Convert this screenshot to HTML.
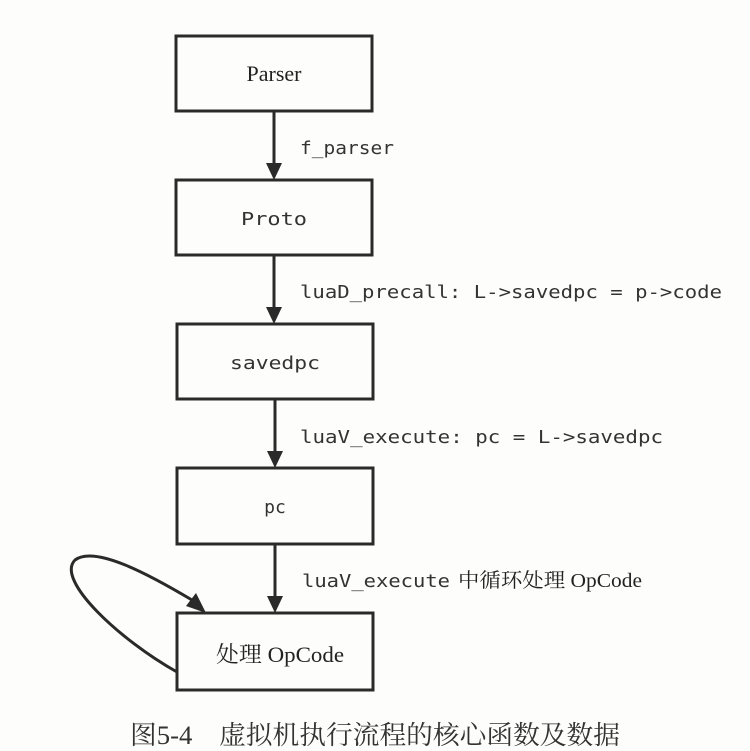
<!DOCTYPE html>
<html><head><meta charset="utf-8"><style>
body{margin:0;background:#fdfdfc;}
svg{display:block}
.m{font-family:"DejaVu Sans Mono","Liberation Mono",monospace;font-size:18px;fill:#333}
.s{font-family:"Liberation Serif","Noto Serif CJK SC",serif;font-size:22px;fill:#222}
</style></head><body>
<svg width="750" height="751" viewBox="0 0 750 751">
<g fill="none" stroke="#2a2a2a" stroke-width="3">
<rect x="176" y="36" width="196" height="75"/>
<rect x="176" y="180" width="196" height="75"/>
<rect x="177" y="324" width="196" height="75"/>
<rect x="177" y="468" width="196" height="76"/>
<rect x="177" y="613" width="196" height="77"/>
<line x1="274" y1="111" x2="274" y2="165"/>
<line x1="274" y1="255" x2="274" y2="309"/>
<line x1="275" y1="399" x2="275" y2="453"/>
<line x1="275" y1="544" x2="275" y2="598"/>
<path d="M177 672 C120 640 55 580 75 560 C95 545 150 575 192 600"/>
</g>
<g fill="#2a2a2a">
<polygon points="266,163 282,163 274,180"/>
<polygon points="266,307 282,307 274,324"/>
<polygon points="267,451 283,451 275,468"/>
<polygon points="267,596 283,596 275,613"/>
<polygon points="186,606 196,593 206,613"/>
</g>
<text x="274" y="81" text-anchor="middle" class="s">Parser</text>
<text x="274" y="225" text-anchor="middle" class="m" textLength="66" lengthAdjust="spacingAndGlyphs">Proto</text>
<text x="275" y="369" text-anchor="middle" class="m" textLength="90" lengthAdjust="spacingAndGlyphs">savedpc</text>
<text x="275" y="513" text-anchor="middle" class="m">pc</text>
<text x="216" y="662" class="s" textLength="128" lengthAdjust="spacingAndGlyphs">处理 OpCode</text>
<text x="300" y="154" class="m" textLength="94" lengthAdjust="spacingAndGlyphs">f_parser</text>
<text x="300" y="298" class="m" textLength="422" lengthAdjust="spacingAndGlyphs">luaD_precall: L-&gt;savedpc = p-&gt;code</text>
<text x="300" y="443" class="m" textLength="363" lengthAdjust="spacingAndGlyphs">luaV_execute: pc = L-&gt;savedpc</text>
<text x="302" y="587" class="m" textLength="148" lengthAdjust="spacingAndGlyphs">luaV_execute</text>
<text x="458" y="587" class="s" style="font-size:20px" textLength="184" lengthAdjust="spacingAndGlyphs">中循环处理 OpCode</text>
<text x="130" y="744" style="font-family:'Liberation Serif','Noto Serif CJK SC',serif;font-size:26px;fill:#333" textLength="490" lengthAdjust="spacingAndGlyphs">图5-4　虚拟机执行流程的核心函数及数据</text>
</svg>
</body></html>
